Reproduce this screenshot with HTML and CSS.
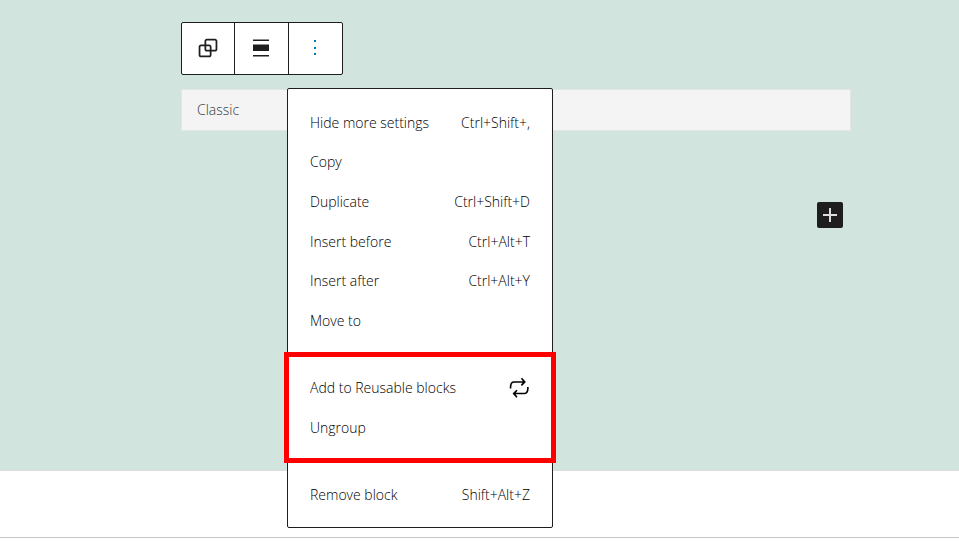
FILE: index.html
```html
<!DOCTYPE html>
<html lang="en">
<head>
  <meta charset="UTF-8">
  <meta name="viewport" content="width=device-width, initial-scale=1.0">
  <title>Block Editor</title>
  <link rel="stylesheet" href="styles.css">
</head>
<body>
  <main class="canvas">
    <div class="toolbar" role="toolbar" aria-label="Block tools">
      <button class="tool" type="button" aria-label="Group">
        <svg viewBox="0 0 24 24" width="28" height="28"><path d="M18 4h-7c-1.100 0-2 .9-2 2v3H6c-1.100 0-2 .9-2 2v7c0 1.100.9 2 2 2h7c1.100 0 2-.9 2-2v-3h3c1.100 0 2-.9 2-2V6c0-1.100-.9-2-2-2zm-4.500 14c0 .3-.2.500-.5.500H6c-.3 0-.5-.2-.5-.5v-7c0-.3.2-.5.5-.5h3V13c0 1.100.9 2 2 2h2.500v3zm0-4.500H11c-.3 0-.5-.2-.5-.5v-2.500H13c.3 0 .5.200.5.500v2.500zm5-.5c0 .3-.2.500-.5.500h-3V11c0-1.100-.9-2-2-2h-2.500V6c0-.3.2-.5.500-.5h7c.3 0 .5.200.5.500v7z"/></svg>
      </button>
      <button class="tool" type="button" aria-label="Align">
        <svg viewBox="0 0 28 28" width="28" height="28"><path d="M5 5.400h16v1.600H5zM5 10.500h16v6.500H5zM5 21h16v1.600H5z"/></svg>
      </button>
      <div class="options">
        <button class="tool active" type="button" aria-label="Options" aria-expanded="true">
          <svg viewBox="0 0 28 28" width="28" height="28"><path d="M12 6h2v2h-2zM12 13h2v2h-2zM12 19h2v2h-2z"/></svg>
        </button>
        <div class="menu" role="menu">
          <div class="menu-group">
            <button class="menu-item" type="button" role="menuitem">Hide more settings <span>Ctrl+Shift+,</span></button>
            <button class="menu-item" type="button" role="menuitem">Copy</button>
            <button class="menu-item" type="button" role="menuitem">Duplicate <span>Ctrl+Shift+D</span></button>
            <button class="menu-item" type="button" role="menuitem">Insert before <span>Ctrl+Alt+T</span></button>
            <button class="menu-item" type="button" role="menuitem">Insert after <span>Ctrl+Alt+Y</span></button>
            <button class="menu-item" type="button" role="menuitem">Move to</button>
          </div>
          <div class="menu-group highlight">
            <button class="menu-item" type="button" role="menuitem">Add to Reusable blocks
              <svg viewBox="2 0 24 24" width="26" height="26" overflow="visible"><path transform="translate(4)" d="M7 7.200h8.200L13.500 9l1.100 1.100 3.600-3.600-3.500-4-1.100 1 1.900 2.300H7c-.9 0-1.700.3-2.300.9-1.400 1.500-1.400 4.200-1.400 5.600v.2h1.500v-.3c0-1.100 0-3.500 1-4.500.3-.3.700-.5 1.200-.5zm13.800 4V11h-1.500v.3c0 1.100 0 3.500-1 4.500-.3.300-.7.500-1.300.5H8.800l1.700-1.700-1.100-1.100L5.900 17l3.500 4 1.100-1-1.900-2.300H17c.9 0 1.700-.3 2.300-.9 1.500-1.400 1.500-4.200 1.500-5.600z"/></svg>
            </button>
            <button class="menu-item" type="button" role="menuitem">Ungroup</button>
          </div>
          <div class="menu-group">
            <button class="menu-item" type="button" role="menuitem">Remove block <span>Shift+Alt+Z</span></button>
          </div>
        </div>
      </div>
    </div>
    <div class="classic-block">Classic</div>
    <button class="add-block" type="button" aria-label="Add block">
      <svg viewBox="0 0 26 26" width="26" height="26"><path d="M12 6h2v6h6v2h-6v6h-2v-6H6v-2h6z"/></svg>
    </button>
  </main>
  <section class="metaboxes"></section>
  <footer class="footer"></footer>
</body>
</html>
```
FILE: styles.css
```css
* {
  box-sizing: border-box;
}
body {
  margin: 0;
  min-height: 100vh;
  display: flex;
  flex-direction: column;
  background: #fff;
  color: #1e1e1e;
  font-family: "Open Sans", "Noto Sans", sans-serif;
  font-size: 14px;
  font-weight: 300;
  line-height: 20px;
}
button {
  border: none;
  padding: 0;
  background: none;
  color: inherit;
  font: inherit;
  cursor: pointer;
}
svg {
  display: block;
  fill: currentColor;
}
.canvas {
  display: flex;
  flex-direction: column;
  align-items: flex-start;
  padding: 22px 108px 242px 181px;
  background: #d1e4dd;
  border-bottom: 1px solid #ddd;
}

/* toolbar */
.toolbar {
  display: flex;
  background: #fff;
  border: 1px solid #1e1e1e;
  border-radius: 2px;
}
.tool {
  display: flex;
  align-items: center;
  justify-content: center;
  width: 53px;
  height: 51px;
  padding-bottom: 1px;
  border-right: 1px solid #1e1e1e;
}
.tool:nth-child(2) {
  width: 54px;
}
.options {
  position: relative;
}
.options .tool {
  border-right: none;
}
.tool.active {
  color: #007cba;
}

/* dropdown */
.menu {
  position: absolute;
  top: 65px;
  left: -2px;
  width: 266px;
  background: #fff;
  border: 1px solid #1e1e1e;
  border-radius: 2px;
  color: #000;
  z-index: 10;
}
.menu-group {
  display: grid;
  grid-auto-rows: 1fr;
  position: relative;
  height: 265px;
  padding: 14px 22px 13px;
}
.menu-group:last-child {
  height: 66px;
}
.menu-group.highlight {
  height: 107px;
}
.highlight::after {
  content: "";
  position: absolute;
  inset: -2px -4px;
  border: 5px solid #f00;
  pointer-events: none;
}
.menu-item {
  display: flex;
  align-items: center;
  justify-content: space-between;
  text-align: left;
  white-space: nowrap;
}

/* blocks */
.classic-block {
  align-self: stretch;
  margin-top: 14px;
  padding: 10px 15px;
  background: #f4f4f4;
  border: 1px solid #e2e4e7;
  color: #32373c;
}
.add-block {
  align-self: flex-end;
  margin: 71px 8px 0 0;
  background: #1e1e1e;
  border-radius: 2px;
  color: #ddd;
}
.metaboxes {
  flex: 1;
}
.footer {
  height: 7px;
  border-top: 1px solid #c3c4c7;
}
```
